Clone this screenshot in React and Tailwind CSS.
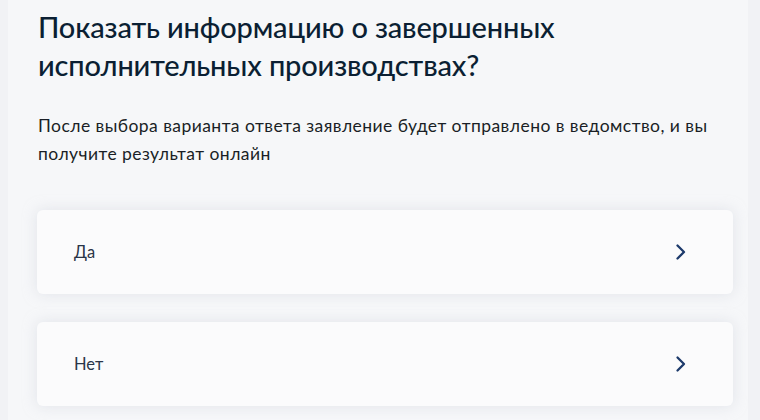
import React from 'react';

const options = ['Да', 'Нет'];

const Chevron = () => (
  <svg width="14" height="20" viewBox="0 0 14 20" fill="none">
    <path d="M3.5 3.5l6.5 6.5-6.5 6.5" stroke="#1d3a6b" strokeWidth="2.3" strokeLinecap="round" strokeLinejoin="round" />
  </svg>
);

export default function App() {
  return (
    <div className="w-[760px] h-[420px] overflow-hidden bg-[#f1f2f5] font-['Lato','Noto_Sans',sans-serif] text-[#0b1f33]">
      <div className="ml-[8px] mr-[12px] h-full bg-[#f6f7f9] pl-[30px] pr-[15px] pt-[8px]">
        <h1 className="text-[29px] leading-[38px] font-medium tracking-[-0.15px] w-[600px]">
          Показать информацию о завершенных исполнительных производствах?
        </h1>
        <p className="mt-[28px] text-[17.5px] leading-[28px] tracking-[0.45px] text-[#1a1f26]">
          После выбора варианта ответа заявление будет отправлено в ведомство, и вы получите результат онлайн
        </p>
        <div className="mt-[42px] flex flex-col gap-[28px] -ml-[1px]">
          {options.map((o) => (
            <div
              key={o}
              className="h-[84px] flex items-center justify-between pl-[37px] pr-[45px] bg-[#fbfbfc] rounded-md shadow-[0_0_14px_rgba(205,210,220,0.5)]"
            >
              <span className="text-[16.5px] text-[#2a3548]">{o}</span>
              <Chevron />
            </div>
          ))}
        </div>
      </div>
    </div>
  );
}
